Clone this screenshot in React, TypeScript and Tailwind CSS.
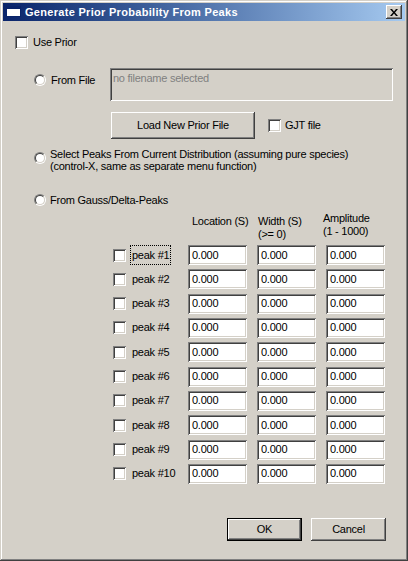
import React from 'react';

const sunken =
  'shadow-[inset_1px_1px_#808080,inset_-1px_-1px_#ffffff,inset_2px_2px_#404040,inset_-2px_-2px_#d4d0c8]';
const raised =
  'shadow-[inset_-1px_-1px_#404040,inset_1px_1px_#ffffff,inset_-2px_-2px_#808080,inset_2px_2px_#d4d0c8]';

function Check() {
  return <div className={`w-[13px] h-[13px] shrink-0 bg-white ${sunken}`} />;
}

function Radio() {
  return (
    <div className="w-[12px] h-[12px] shrink-0 rounded-full border border-t-[#808080] border-l-[#808080] border-b-white border-r-white">
      <div className="w-full h-full rounded-full border border-t-[#404040] border-l-[#404040] border-b-[#d4d0c8] border-r-[#d4d0c8] bg-white" />
    </div>
  );
}

function Field() {
  return (
    <div className={`w-[59px] h-[20px] shrink-0 bg-white pl-[4px] flex items-center ${sunken}`}>
      0.000
    </div>
  );
}

const peaks = Array.from({ length: 10 }, (_, i) => i + 1);

export default function App() {
  return (
    <div className="w-[408px] h-[561px] bg-[#d4d0c8] p-[3px] flex flex-col text-[11px] leading-[13px] tracking-[-0.25px] text-black font-['Liberation_Sans',Arial,sans-serif] shadow-[inset_-1px_-1px_#404040,inset_1px_1px_#d4d0c8,inset_-2px_-2px_#808080,inset_2px_2px_#ffffff]">
      {/* title bar */}
      <div className="h-[18px] flex items-center bg-gradient-to-r from-[#0a246a] to-[#a6caf0]">
        <svg width="16" height="12" viewBox="0 0 16 12" className="ml-[3px] shrink-0">
          <rect x="0.5" y="0.5" width="14" height="10" fill="#ffffff" stroke="#0a246a" />
          <rect x="0" y="0" width="15" height="3" fill="#0a246a" />
        </svg>
        <span className="ml-[3px] font-bold text-white tracking-[0.3px]">
          Generate Prior Probability From Peaks
        </span>
        <div className={`ml-auto mr-[3px] w-[16px] h-[14px] bg-[#d4d0c8] flex items-center justify-center ${raised}`}>
          <svg width="8" height="7" viewBox="0 0 8 7">
            <path d="M0 0h2l2 2.5L6 0h2L5 3.5 8 7H6L4 4.5 2 7H0l3-3.5z" fill="#000000" />
          </svg>
        </div>
      </div>

      {/* use prior */}
      <div className="mt-[15px] h-[13px] flex items-center">
        <div className="ml-[12px]">
          <Check />
        </div>
        <span className="ml-[5px]">Use Prior</span>
      </div>

      {/* from file */}
      <div className="mt-[19px] flex items-start">
        <div className="w-[107px] shrink-0 mt-[6px] h-[12px] flex items-center">
          <div className="ml-[31px]">
            <Radio />
          </div>
          <span className="ml-[5px]">From File</span>
        </div>
        <div className={`w-[283px] h-[33px] pl-[3px] pt-[4px] text-[#808080] ${sunken}`}>
          no filename selected
        </div>
      </div>

      <div className="mt-[11px] h-[27px] flex items-center">
        <div
          className={`ml-[108px] w-[144px] h-[27px] flex items-center justify-center ${raised}`}
        >
          Load New Prior File
        </div>
        <div className="ml-[13px]">
          <Check />
        </div>
        <span className="ml-[4px]">GJT file</span>
      </div>

      {/* select peaks */}
      <div className="mt-[9px] flex items-start">
        <div className="ml-[31px] mt-[4px]">
          <Radio />
        </div>
        <div className="ml-[4px] leading-[12px]">
          <div>Select Peaks From Current Distribution (assuming pure species)</div>
          <div>(control-X, same as separate menu function)</div>
        </div>
      </div>

      {/* gauss */}
      <div className="mt-[22px] h-[12px] flex items-center">
        <div className="ml-[31px]">
          <Radio />
        </div>
        <span className="ml-[4px]">From Gauss/Delta-Peaks</span>
      </div>

      {/* headers */}
      <div className="mt-[6px] flex items-start">
        <div className="ml-[185px] w-[69px] pl-[4px] mt-[3px]">Location (S)</div>
        <div className="w-[69px] pl-[1px] mt-[3px]">
          <div>Width (S)</div>
          <div>(&gt;= 0)</div>
        </div>
        <div className="ml-[-3px]">
          <div>Amplitude</div>
          <div>(1 - 1000)</div>
        </div>
      </div>

      {/* peaks */}
      <div className="mt-[4px] flex flex-col gap-y-[4.33px]">
        {peaks.map((n) => (
          <div key={n} className="h-[20px] flex items-center">
            <div className="ml-[110px]">
              <Check />
            </div>
            <div className="ml-[4px] w-[58px] shrink-0 h-[20px] flex items-center">
              <span
                className={`h-[20px] px-[1px] flex items-center border border-dotted ${
                  n === 1 ? 'border-[#000000]' : 'border-transparent'
                }`}
              >
                peak #{n}
              </span>
            </div>
            <Field />
            <div className="ml-[10px]">
              <Field />
            </div>
            <div className="ml-[10px]">
              <Field />
            </div>
          </div>
        ))}
      </div>

      {/* buttons */}
      <div className="mt-[34px] flex">
        <div className="ml-[224px] w-[75px] h-[23px] border border-black">
          <div className={`w-full h-full flex items-center justify-center ${raised}`}>OK</div>
        </div>
        <div className={`ml-[9px] w-[75px] h-[23px] flex items-center justify-center ${raised}`}>
          Cancel
        </div>
      </div>
    </div>
  );
}
